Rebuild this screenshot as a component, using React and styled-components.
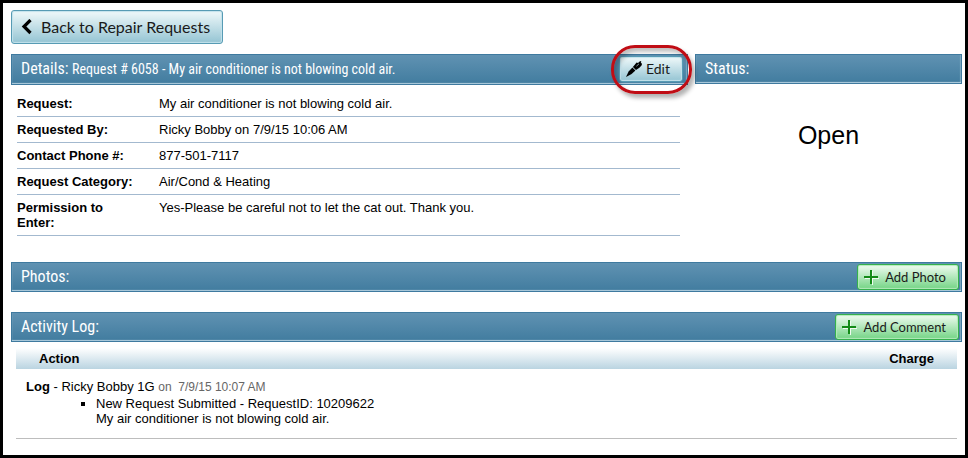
import React from 'react'
import styled, { createGlobalStyle } from 'styled-components'

const GlobalStyle = createGlobalStyle`
  * {
    box-sizing: border-box;
  }
  body {
    margin: 0;
    background-color: white;
    color: black;
    font-family: 'Liberation Sans', Arial, sans-serif;
    font-size: 13px;
    line-height: 15px;
  }
`
const Page = styled.main`
  min-height: 100vh;
  padding: 7px 3px 7px 8px;
  border: 3px solid black;
`
const Columns = styled.div`
  display: grid;
  grid-template-columns: minmax(0, 677fr) minmax(0, 267fr);
  gap: 7px;
  margin: 10px 0 26px;
`
const Bar = styled.header`
  display: flex;
  align-items: center;
  justify-content: space-between;
  height: ${({ $tall }) => ($tall ? '31px' : '30px')};
  padding: ${({ $tall }) => ($tall ? '0 4px 2px 9px' : '0 2px 0 9px')};
  border: 1px solid #3f7a9f;
  background: linear-gradient(#6092b2, #417c9f);
  box-shadow: inset 1px -2px 1px -1px #b3d0df, inset -2px 0 1px -1px #7fa9c1;
`
const BarTitle = styled.h2`
  margin: 0;
  color: white;
  font-family: 'Roboto Condensed', Roboto, sans-serif;
  font-size: 16px;
  font-weight: 400;
  line-height: 20px;
  white-space: nowrap;
`
const TitleDetail = styled.span`
  font-size: 14px;
`
const Button = styled.button`
  display: inline-flex;
  align-items: center;
  gap: 4px;
  height: 26px;
  padding: 0 12px 0 6px;
  border: 1px solid #579bb4;
  border-radius: 3px;
  background: linear-gradient(#f0f9fa, #94c4d3);
  box-shadow: inset 0 0 1px 1px #c3e2eb;
  color: #1a1a1a;
  font-family: Lato, sans-serif;
  font-size: 14px;
  line-height: 20px;
  white-space: nowrap;
  cursor: pointer;
`
const BackButton = styled(Button)`
  gap: 9px;
  height: 34px;
  padding: 0 12px 0 9px;
  font-size: 16px;
`
const AddButton = styled(Button)`
  gap: 6px;
  border-color: #35b14c;
  background: linear-gradient(#f0fbf1, #74d485);
  box-shadow: inset 0 0 1px 1px #b3e9bb;
  font-size: 13px;
`
const EditHolder = styled.div`
  position: relative;
  display: flex;
`
const Highlight = styled.span`
  position: absolute;
  inset: -11px -9px -12px -8px;
  border: 3px solid #c00d15;
  border-radius: 24px;
  box-shadow: 3px 4px 4px rgba(0, 0, 0, 0.3), inset 3px 4px 4px rgba(0, 0, 0, 0.25);
  pointer-events: none;
`
const Facts = styled.table`
  width: calc(100% - 14px);
  margin: 6px 8px 0 6px;
  border-collapse: separate;
  border-spacing: 0;
  table-layout: fixed;
`
const FactName = styled.th`
  width: 142px;
  padding: 5px 20px 5px 0;
  border-bottom: 1px solid #a3b9cf;
  text-align: left;
  vertical-align: top;
`
const FactValue = styled.td`
  padding: 5px 0;
  border-bottom: 1px solid #a3b9cf;
  vertical-align: top;
`
const StatusText = styled.p`
  margin: 36px 0 0;
  font-size: 25px;
  line-height: 30px;
  text-align: center;
`
const ActivitySection = styled.section`
  margin-top: 20px;
`
const LogTable = styled.table`
  width: calc(100% - 10px);
  margin: 6px 5px 0;
  border-collapse: separate;
  border-spacing: 0;
`
const LogHeading = styled.th`
  height: 21px;
  padding: 0 23px;
  background: linear-gradient(white, #bad4e1);
  text-align: ${({ $end }) => ($end ? 'right' : 'left')};
`
const LogCell = styled.td`
  padding: 10px 10px 12px;
  border-bottom: 1px solid #bdbdbd;
`
const LogDate = styled.span`
  color: #666;
  font-size: 12px;
`
const Entries = styled.ul`
  margin: 1px 0 0;
  padding-left: 70px;
  list-style: square;
`

const BackIcon = () => (
  <svg width="11" height="16" viewBox="0 0 11 16" aria-hidden="true">
    <path d="M9.5 1 3 7.5 9.5 14" fill="none" stroke="black" strokeWidth="3.2" />
  </svg>
)

const PenIcon = () => (
  <svg width="16" height="16" viewBox="0 0 16 16" aria-hidden="true">
    <path d="M0 16 2.6 10.4 6.4 6.4 9.4 9.4 5.6 13z" />
    <path d="M6.9 5.9 10.6 1.6 12 1.9 14.2 0l1.2.8-.7 1.3 1.3.5-.3 1.6-2.3 2.5-3.4 2.3z" />
    <path d="m10.4 5.2 2.6-2.4" fill="none" stroke="#c7dfe6" strokeWidth=".7" />
  </svg>
)

const PlusIcon = () => (
  <svg width="15" height="15" viewBox="0 0 15 15" aria-hidden="true">
    <path d="M8.5 1v14M1 8.5h14" fill="none" stroke="#f0fbf1" strokeWidth="1" />
    <path d="M7 0v14M0 7h14" fill="none" stroke="#138a17" strokeWidth="2" />
  </svg>
)

const facts = [
  ['Request:', 'My air conditioner is not blowing cold air.'],
  ['Requested By:', 'Ricky Bobby on 7/9/15 10:06 AM'],
  ['Contact Phone #:', '877-501-7117'],
  ['Request Category:', 'Air/Cond & Heating'],
  ['Permission to Enter:', 'Yes-Please be careful not to let the cat out. Thank you.'],
]

const App = () => {
  return (
    <>
      <GlobalStyle />
      <Page>
        <BackButton type="button">
          <BackIcon />
          Back to Repair Requests
        </BackButton>
        <Columns>
          <section>
            <Bar $tall>
              <BarTitle>
                Details: <TitleDetail>Request # 6058 - My air conditioner is not blowing cold air.</TitleDetail>
              </BarTitle>
              <EditHolder>
                <Button type="button">
                  <PenIcon />
                  Edit
                </Button>
                <Highlight />
              </EditHolder>
            </Bar>
            <Facts>
              <tbody>
                {facts.map(([name, value]) => (
                  <tr key={name}>
                    <FactName scope="row">{name}</FactName>
                    <FactValue>{value}</FactValue>
                  </tr>
                ))}
              </tbody>
            </Facts>
          </section>
          <section>
            <Bar>
              <BarTitle>Status:</BarTitle>
            </Bar>
            <StatusText>Open</StatusText>
          </section>
        </Columns>
        <section>
          <Bar>
            <BarTitle>Photos:</BarTitle>
            <AddButton type="button">
              <PlusIcon />
              Add Photo
            </AddButton>
          </Bar>
        </section>
        <ActivitySection>
          <Bar>
            <BarTitle>Activity Log:</BarTitle>
            <AddButton type="button">
              <PlusIcon />
              Add Comment
            </AddButton>
          </Bar>
          <LogTable>
            <thead>
              <tr>
                <LogHeading scope="col">Action</LogHeading>
                <LogHeading scope="col" $end>
                  Charge
                </LogHeading>
              </tr>
            </thead>
            <tbody>
              <tr>
                <LogCell colSpan={2}>
                  <b>Log</b> - Ricky Bobby 1G <LogDate>on &nbsp;7/9/15 10:07 AM</LogDate>
                  <Entries>
                    <li>
                      New Request Submitted - RequestID: 10209622
                      <br />
                      My air conditioner is not blowing cold air.
                    </li>
                  </Entries>
                </LogCell>
              </tr>
            </tbody>
          </LogTable>
        </ActivitySection>
      </Page>
    </>
  )
}

export default App
